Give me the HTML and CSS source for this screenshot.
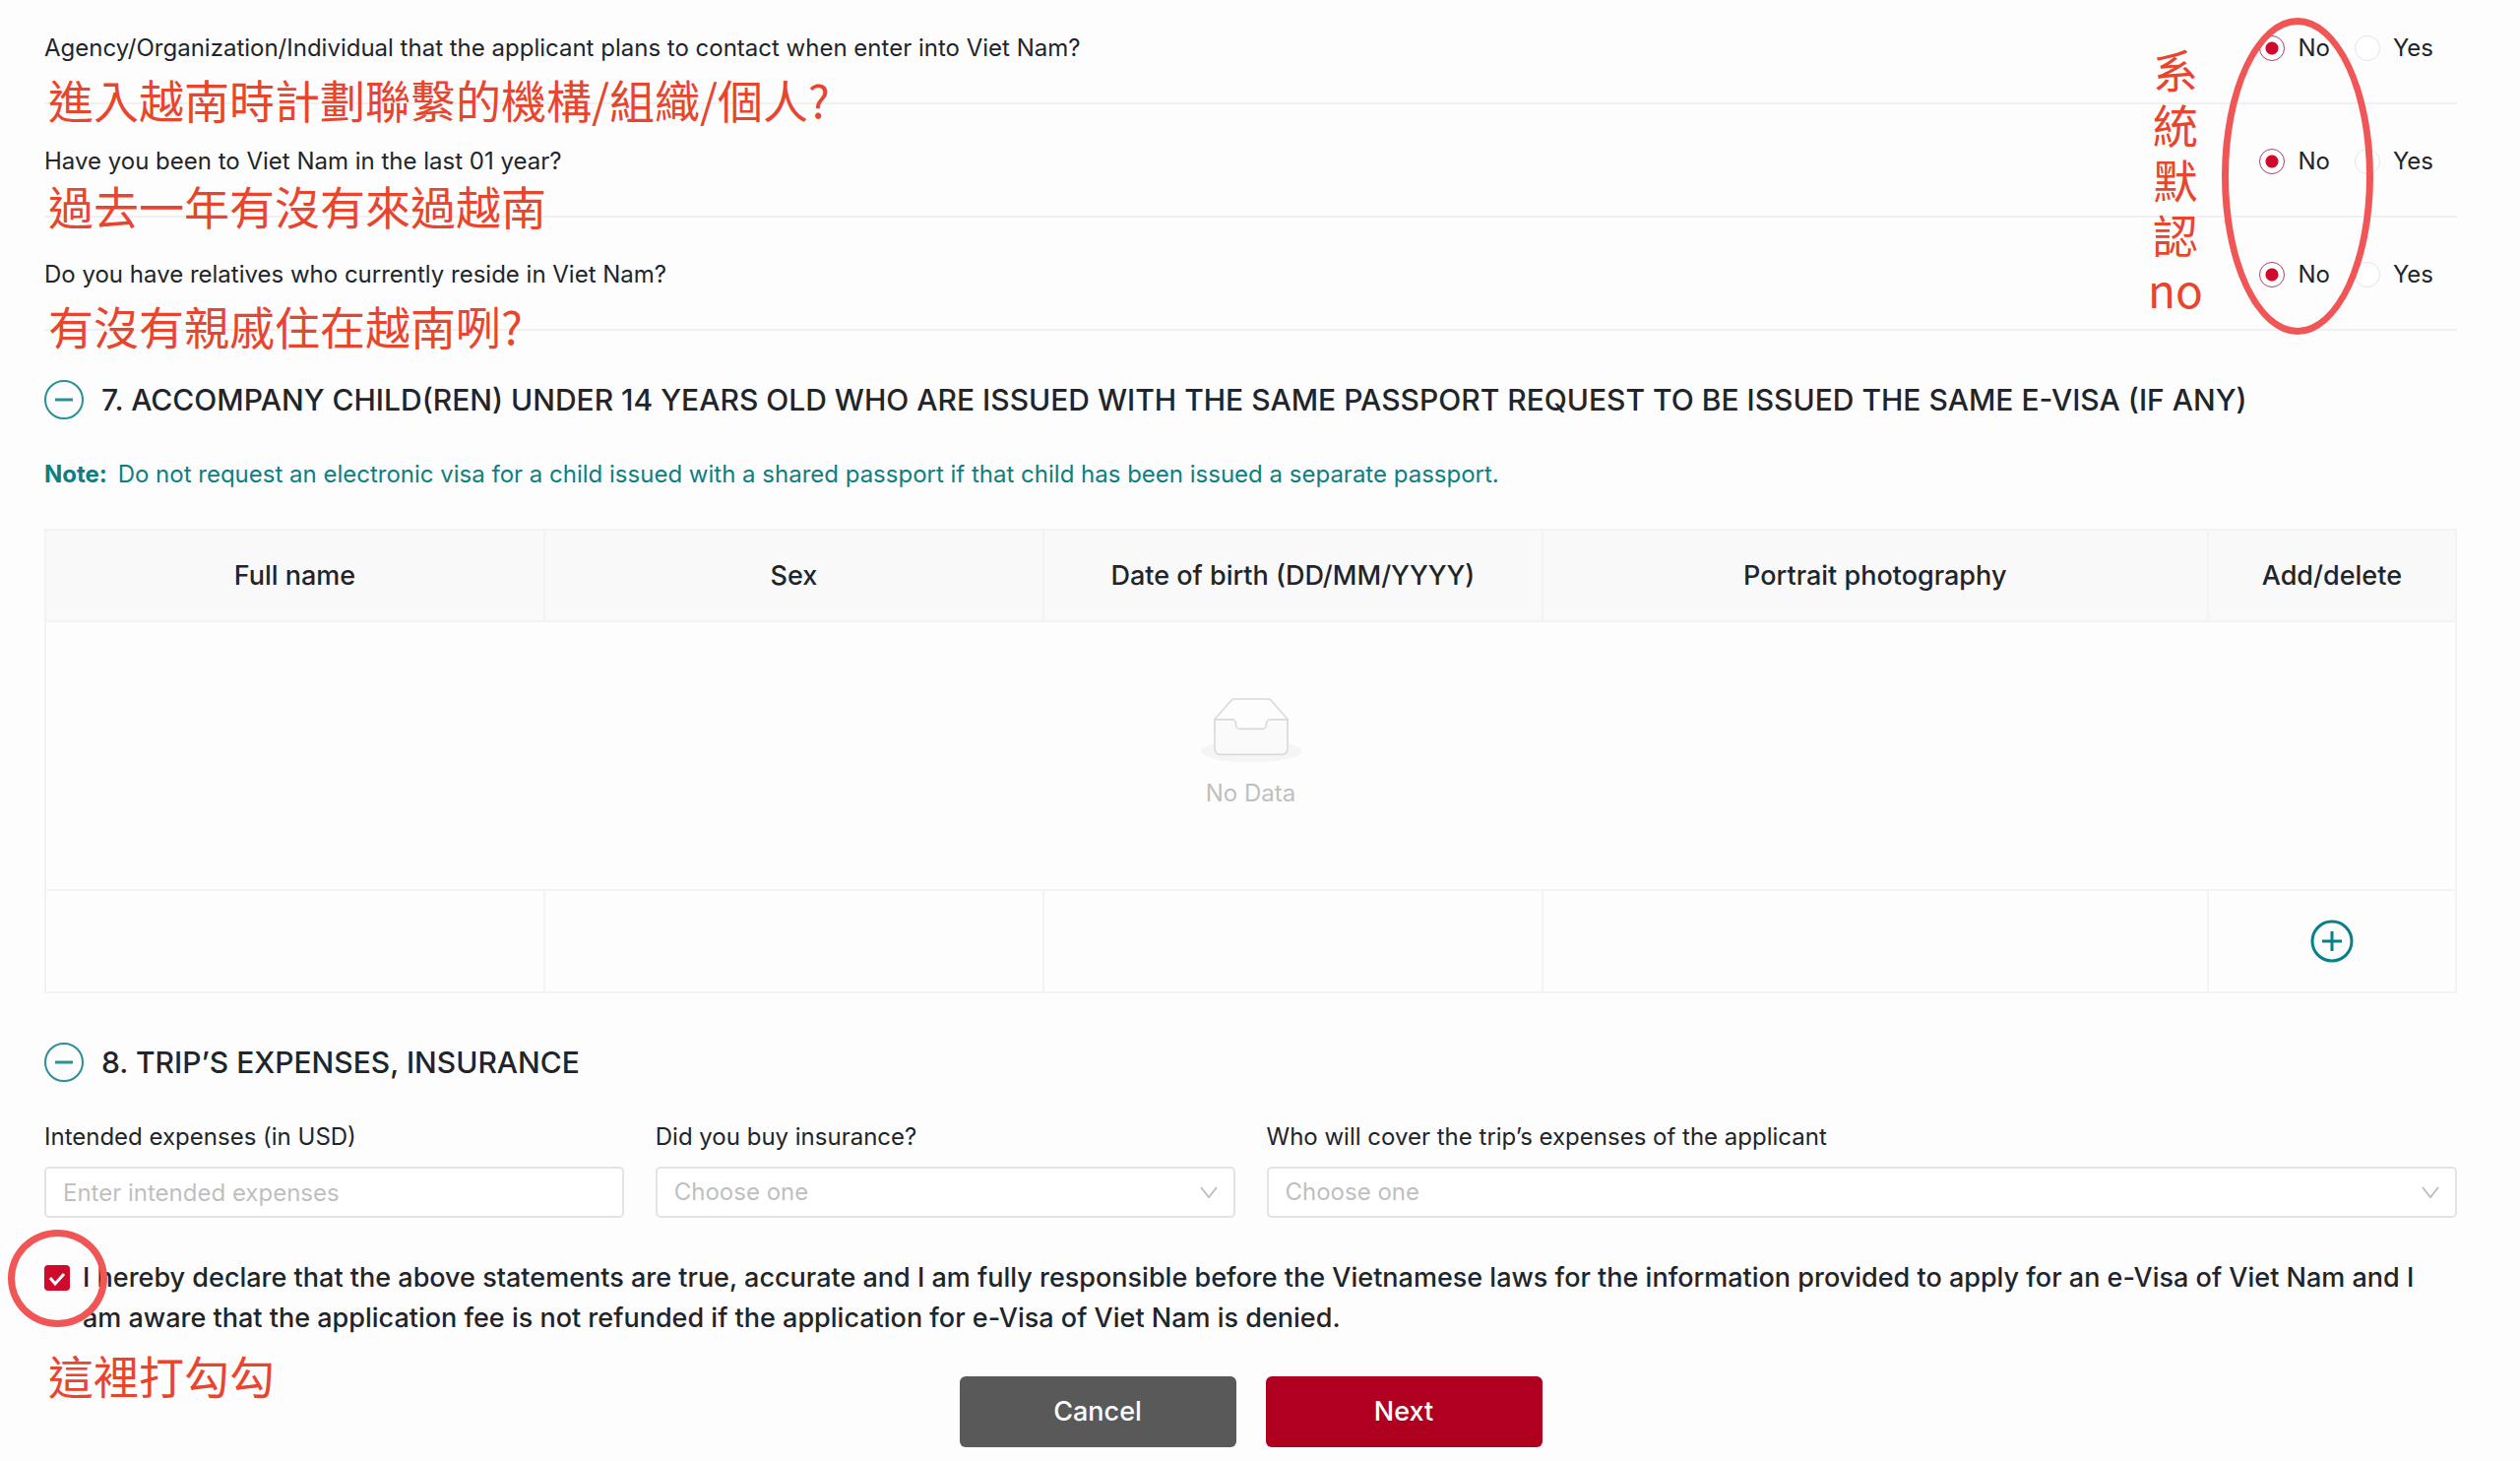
FILE: index.html
```html
<!DOCTYPE html>
<html lang="en">
<head>
<meta charset="utf-8">
<meta name="viewport" content="width=device-width, initial-scale=1">
<title>E-Visa application</title>
<link rel="stylesheet" href="styles.css">
</head>
<body>
<form class="page">
  <section class="questions">
    <div class="question" role="radiogroup" aria-labelledby="q-contact">
      <p id="q-contact">Agency/Organization/Individual that the applicant plans to contact when enter into Viet Nam?</p>
      <div class="options">
        <label class="option"><input class="radio" type="radio" name="contact" checked>No</label>
        <label class="option"><input class="radio" type="radio" name="contact">Yes</label>
      </div>
      <p class="note-zh" lang="zh-Hant">進入越南時計劃聯繫的機構/組織/個人?</p>
    </div>
    <div class="question" role="radiogroup" aria-labelledby="q-visited">
      <p id="q-visited">Have you been to Viet Nam in the last 01 year?</p>
      <div class="options">
        <label class="option"><input class="radio" type="radio" name="visited" checked>No</label>
        <label class="option"><input class="radio" type="radio" name="visited">Yes</label>
      </div>
      <p class="note-zh note-zh-high" lang="zh-Hant">過去一年有沒有來過越南</p>
    </div>
    <div class="question" role="radiogroup" aria-labelledby="q-relatives">
      <p id="q-relatives">Do you have relatives who currently reside in Viet Nam?</p>
      <div class="options">
        <label class="option"><input class="radio" type="radio" name="relatives" checked>No</label>
        <label class="option"><input class="radio" type="radio" name="relatives">Yes</label>
      </div>
      <p class="note-zh" lang="zh-Hant">有沒有親戚住在越南咧?</p>
    </div>
    <p class="note-column" lang="zh-Hant">系<br>統<br>默<br>認<br>no</p>
    <div class="ring ring-options"></div>
  </section>

  <section class="accompany">
    <h2 class="section-title">
      <button class="toggle" type="button" aria-label="Collapse section 7">
        <svg viewBox="0 0 40 40" width="40" height="40"><circle cx="20" cy="20" r="19"/><path class="thick" d="M11 20h18"/></svg>
      </button>
      7. ACCOMPANY CHILD(REN) UNDER 14 YEARS OLD WHO ARE ISSUED WITH THE SAME PASSPORT REQUEST TO BE ISSUED THE SAME E-VISA (IF ANY)
    </h2>
    <p class="hint"><strong>Note:</strong> Do not request an electronic visa for a child issued with a shared passport if that child has been issued a separate passport.</p>
    <table class="children">
      <colgroup><col class="col-m"><col class="col-m"><col class="col-m"><col class="col-l"><col></colgroup>
      <thead>
        <tr><th>Full name</th><th>Sex</th><th>Date of birth (DD/MM/YYYY)</th><th>Portrait photography</th><th>Add/delete</th></tr>
      </thead>
      <tbody>
        <tr class="empty-row">
          <td colspan="5">
            <div class="empty">
              <svg viewBox="0 0 64 41" width="104" height="66">
                <ellipse cx="32" cy="33" rx="32" ry="7" fill="#f5f5f5"/>
                <g fill-rule="nonzero" stroke="#d9d9d9">
                  <path fill="#fdfdfd" d="M55 12.76L44.854 1.258C44.367.474 43.656 0 42.907 0H21.093c-.749 0-1.46.474-1.947 1.257L9 12.761V22h46v-9.24z"/>
                  <path fill="#fafafa" d="M41.613 15.931c0-1.605.994-2.93 2.227-2.931H55v18.137C55 33.26 53.68 35 52.05 35h-40.1C10.32 35 9 33.259 9 31.137V13h11.16c1.233 0 2.227 1.323 2.227 2.928v.022c0 1.605 1.005 2.901 2.237 2.901h14.752c1.232 0 2.237-1.308 2.237-2.913v-.007z"/>
                </g>
              </svg>
              <span>No Data</span>
            </div>
          </td>
        </tr>
        <tr class="add-row">
          <td></td><td></td><td></td><td></td>
          <td>
            <button class="add" type="button" aria-label="Add child">
              <svg viewBox="0 0 44 44" width="44" height="44"><circle cx="22" cy="22" r="20"/><path d="M12 22h20M22 12v20"/></svg>
            </button>
          </td>
        </tr>
      </tbody>
    </table>
  </section>

  <section>
    <h2 class="section-title">
      <button class="toggle" type="button" aria-label="Collapse section 8">
        <svg viewBox="0 0 40 40" width="40" height="40"><circle cx="20" cy="20" r="19"/><path class="thick" d="M11 20h18"/></svg>
      </button>
      8. TRIP’S EXPENSES, INSURANCE
    </h2>
    <div class="fields">
      <div class="field">
        <label for="expenses">Intended expenses (in USD)</label>
        <input class="control" id="expenses" type="text" placeholder="Enter intended expenses">
      </div>
      <div class="field">
        <label for="insurance">Did you buy insurance?</label>
        <div class="select">
          <select class="control" id="insurance"><option>Choose one</option></select>
          <svg class="chevron" viewBox="0 0 18 12" width="18" height="12"><path d="M1 1l8 10 8-10"/></svg>
        </div>
      </div>
      <div class="field field-wide">
        <label for="cover">Who will cover the trip’s expenses of the applicant</label>
        <div class="select">
          <select class="control" id="cover"><option>Choose one</option></select>
          <svg class="chevron" viewBox="0 0 18 12" width="18" height="12"><path d="M1 1l8 10 8-10"/></svg>
        </div>
      </div>
    </div>
  </section>

  <section class="confirm">
    <label class="declare">
      <span class="tick">
        <input class="checkbox" type="checkbox" checked>
        <svg viewBox="0 0 26 26" width="26" height="26"><path d="M6 13l5 6 9-10"/></svg>
      </span>
      <span>I hereby declare that the above statements are true, accurate and I am fully responsible before the Vietnamese laws for the information provided to apply for an e-Visa of Viet Nam and I<br>am aware that the application fee is not refunded if the application for e-Visa of Viet Nam is denied.</span>
    </label>
    <div class="ring ring-tick"></div>
    <p class="note-zh note-tick" lang="zh-Hant">這裡打勾勾</p>
    <div class="actions">
      <button class="btn btn-cancel" type="button">Cancel</button>
      <button class="btn btn-next" type="submit">Next</button>
    </div>
  </section>
</form>
</body>
</html>
```
FILE: styles.css
```css
* { box-sizing: border-box; }
body {
  margin: 0;
  background: #fdfdfd;
  color: #212529;
  font: 24px/40px Inter, "Noto Sans CJK TC", sans-serif;
}
p, h2 { margin: 0; }
button, input, select { font: inherit; color: inherit; }
svg { display: block; fill: none; }
.page { padding: 0 64px 14px 45px; }

.questions { position: relative; padding-top: 6px; }
.question {
  position: relative;
  display: flex;
  justify-content: space-between;
  height: 115px;
  padding: 23px 24px 0 0;
}
.question::after {
  content: "";
  position: absolute;
  left: 0;
  right: 0;
  top: 98px;
  border-top: 2px solid #f0f0f0;
}
.options { display: flex; gap: 25px; }
.option { display: flex; align-items: center; gap: 13px; height: 40px; }
.radio {
  appearance: none;
  width: 26px;
  height: 26px;
  margin: 0;
  border: 1px solid #e4e4e4;
  border-radius: 50%;
  background: #fff;
}
.radio:checked {
  border-color: #a8436b;
  background: radial-gradient(circle, #cf0a2c 6px, #fff 7px);
}

.note-zh, .note-column {
  position: absolute;
  z-index: 1;
  color: #e8452f;
  font: 46px/56px "Noto Sans CJK TC", sans-serif;
  white-space: nowrap;
}
.note-zh { left: 4px; top: 66px; }
.note-zh-high { top: 59px; }
.note-column { right: 258px; top: 41px; text-align: center; }
.ring {
  position: absolute;
  z-index: 2;
  border: 7px solid #f15656;
  border-radius: 50%;
  pointer-events: none;
}
.ring-options { right: 85px; top: 18px; width: 154px; height: 322px; }

.section-title {
  display: flex;
  align-items: center;
  gap: 18px;
  font-size: 30px;
  font-weight: 500;
}
.accompany { padding-top: 35px; }
.toggle, .add {
  padding: 0;
  border: 0;
  background: none;
  stroke: #2b8f96;
  stroke-width: 2;
}
.thick { stroke-width: 3; }
.hint { margin-top: 36px; color: #0b7f82; }
.hint strong { margin-right: 4px; }

.children {
  width: 100%;
  margin: 35px 0 50px;
  border-collapse: collapse;
  table-layout: fixed;
}
.col-m { width: 20.7%; }
.col-l { width: 27.6%; }
.children th, .children td { padding: 0; border: 2px solid #f3f3f3; }
.children th {
  height: 93px;
  background: #f9f9f9;
  font-size: 27px;
  font-weight: 500;
}
.empty-row td { height: 273px; }
.add-row td { height: 104px; }
.empty { display: flex; flex-direction: column; align-items: center; gap: 10px; color: #bfbfbf; }
.empty svg { overflow: visible; }
.add { display: block; margin: 0 auto; stroke: #07808a; stroke-width: 3; }

.fields {
  display: grid;
  grid-template-columns: repeat(4, 1fr);
  gap: 32px;
  margin-top: 36px;
}
.field { display: flex; flex-direction: column; gap: 10px; }
.field-wide { grid-column: span 2; }
.select { position: relative; }
.control {
  appearance: none;
  display: block;
  width: 100%;
  height: 52px;
  padding: 0 17px;
  border: 2px solid #e3e3e3;
  border-radius: 5px;
  background: #fff;
  color: #bfbfbf;
}
.control::placeholder { color: #bfbfbf; opacity: 1; }
.chevron { position: absolute; right: 18px; top: 20px; stroke: #bfbfbf; stroke-width: 2; }

.confirm { position: relative; margin-top: 40px; }
.declare {
  display: flex;
  gap: 13px;
  font-size: 27px;
  font-weight: 500;
  line-height: 41px;
}
.tick { position: relative; flex: none; padding-top: 8px; }
.checkbox {
  appearance: none;
  display: block;
  width: 26px;
  height: 26px;
  margin: 0;
  border-radius: 4px;
  background: #cf0a2c;
}
.tick svg { position: absolute; left: 0; top: 8px; stroke: #fff; stroke-width: 3; }
.ring-tick { left: -37px; top: -28px; width: 101px; height: 99px; }
.note-tick { top: 91px; }
.actions { display: flex; justify-content: center; gap: 30px; margin-top: 39px; }
.btn {
  width: 281px;
  height: 72px;
  border: 0;
  border-radius: 6px;
  color: #fff;
  font-size: 27px;
  font-weight: 500;
}
.btn-cancel { background: #595959; }
.btn-next { background: #b00020; }
```
